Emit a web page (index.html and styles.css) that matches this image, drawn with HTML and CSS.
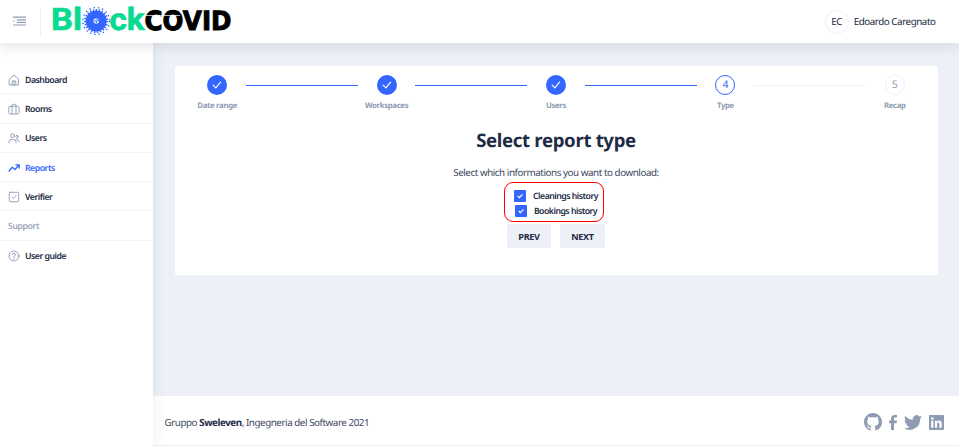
FILE: index.html
```html
<!DOCTYPE html>
<html lang="en">
<head>
<meta charset="utf-8">
<title>BlockCOVID - Reports</title>
<link rel="stylesheet" href="styles.css">
</head>
<body>
<header class="header">
  <svg class="menu-icon" viewBox="0 0 14 10"><path d="M0 1.100h13M4 3.800h9M4 6.400h9M0 9h13"/><path d="M.2 5h1.500"/></svg>
  <div class="logo-wrap">
    <svg class="logo" viewBox="0 0 182 32">
      <g class="logo-green">
        <text x="-1" y="25.500" textLength="31" lengthAdjust="spacingAndGlyphs">Bl</text>
        <text x="57.500" y="25.500" textLength="35" lengthAdjust="spacingAndGlyphs">ck</text>
      </g>
      <g class="virus">
        <circle cx="44.200" cy="17" r="10.500"/>
        <circle class="spikes" cx="44.200" cy="17" r="11"/>
        <circle class="dots-ring" cx="44.200" cy="17" r="13.400"/>
        <circle class="core" cx="44.200" cy="17" r="2.800"/>
        <path class="core-cut" d="M42 17h2.500v2M45 14.500v2h2"/>
      </g>
      <text class="logo-black" x="92.500" y="26" textLength="87" lengthAdjust="spacingAndGlyphs">COVID</text>
      <path class="logo-slit" d="M94 11.500h34"/>
    </svg>
  </div>
  <div class="user"><span class="avatar">EC</span><span>Edoardo Caregnato</span></div>
</header>
<div class="body">
  <nav class="sidebar">
    <a class="item"><svg viewBox="0 0 12 12"><path d="M1.500 5 6 1l4.500 4v6h-9zM4.200 11V7h3.600v4M6 7v4"/></svg>Dashboard</a>
    <a class="item"><svg viewBox="0 0 12 12"><rect x=".8" y="3.300" width="10.400" height="7.700" rx="1.300"/><path d="M4 11V2.200Q4 1.300 5 1.300h2q1 0 1 .9V11"/></svg>Rooms</a>
    <a class="item"><svg viewBox="0 0 12 12"><circle cx="4.500" cy="3.700" r="1.900"/><circle cx="9" cy="4.700" r="1.300"/><path d="M1 10.800v-1Q1.300 7.300 4.500 7.300T8 9.800v1M8 7.500q3-.5 3.300 2.300"/></svg>Users</a>
    <a class="item active"><svg viewBox="0 0 12 12"><path d="m1 9 3.300-3.700L7 7.500 11 3M8 2.800h3.200V6"/></svg>Reports</a>
    <a class="item"><svg viewBox="0 0 12 12"><rect x="1.300" y="1.300" width="9.400" height="9.400" rx="1"/><path d="m4 6 1.500 1.500L8.200 4.300"/></svg>Verifier</a>
    <div class="item group">Support</div>
    <a class="item"><svg viewBox="0 0 12 12"><circle cx="6" cy="6" r="5"/><path d="M4.500 4.700Q4.600 3.300 6 3.300t1.500 1.300Q7.500 5.600 6 6.100V7M6 8.200v.9"/></svg>User guide</a>
  </nav>
  <div class="column">
    <main class="content">
      <section class="card">
        <div class="stepper">
          <div class="step"><span class="circle done"><svg viewBox="0 0 20 20"><path d="m6.200 10.200 2.600 2.600 4.800-5.600"/></svg></span>Date range</div>
          <i class="line"></i>
          <div class="step"><span class="circle done"><svg viewBox="0 0 20 20"><path d="m6.200 10.200 2.600 2.600 4.800-5.600"/></svg></span>Workspaces</div>
          <i class="line"></i>
          <div class="step"><span class="circle done"><svg viewBox="0 0 20 20"><path d="m6.200 10.200 2.600 2.600 4.800-5.600"/></svg></span>Users</div>
          <i class="line"></i>
          <div class="step"><span class="circle current">4</span>Type</div>
          <i class="line pending"></i>
          <div class="step"><span class="circle">5</span>Recap</div>
        </div>
        <h1>Select report type</h1>
        <p class="hint">Select which informations you want to download:</p>
        <div class="options">
          <label class="option"><span class="box"><svg viewBox="0 0 12 12"><path d="m3.700 6 1.700 1.700 3-3.400"/></svg></span>Cleanings history</label>
          <label class="option"><span class="box"><svg viewBox="0 0 12 12"><path d="m3.700 6 1.700 1.700 3-3.400"/></svg></span>Bookings history</label>
        </div>
        <div class="buttons"><button class="prev">PREV</button><button class="next">NEXT</button></div>
      </section>
    </main>
    <footer class="footer">
      <span class="credit">Gruppo <b>Sweleven</b>, Ingegneria del Software 2021</span>
      <div class="socials">
        <svg width="18" height="18" viewBox="0 0 16 16"><path d="M8 0C3.580 0 0 3.580 0 8c0 3.540 2.290 6.530 5.470 7.590.4.070.55-.17.55-.38 0-.19-.01-.82-.01-1.490-2.010.37-2.530-.49-2.690-.94-.09-.23-.48-.94-.82-1.130-.28-.15-.68-.52-.01-.53.63-.01 1.080.58 1.230.82.72 1.210 1.870.87 2.330.66.07-.52.28-.87.51-1.070-1.780-.2-3.640-.89-3.640-3.950 0-.87.31-1.590.82-2.150-.08-.2-.36-1.020.08-2.120 0 0 .67-.21 2.200.82.64-.18 1.320-.27 2-.27s1.360.09 2 .27c1.530-1.040 2.200-.82 2.200-.82.44 1.100.16 1.920.08 2.120.51.56.82 1.270.82 2.150 0 3.070-1.870 3.750-3.650 3.950.29.25.54.73.54 1.480 0 1.070-.01 1.930-.01 2.200 0 .21.15.46.55.38A8 8 0 0 0 16 8c0-4.420-3.580-8-8-8z"/></svg>
        <svg width="8" height="15" viewBox="0 0 8 15"><path d="M2 15V8.200H0V5.500h2V3.700C2 1.400 3.300 0 5.700 0H8v2.600H6.300C5.300 2.600 5 3 5 3.900v1.600h3l-.4 2.700H5V15z"/></svg>
        <svg width="18" height="15" viewBox="0 2 24 20"><path d="M24 4.600a10 10 0 0 1-2.800.8 5 5 0 0 0 2.200-2.700c-1 .6-2 1-3.100 1.200a4.900 4.900 0 0 0-8.400 4.500C7.800 8.200 4.100 6.200 1.700 3.200a4.900 4.900 0 0 0 1.500 6.500 5 5 0 0 1-2.200-.6 4.900 4.900 0 0 0 4 4.900 5 5 0 0 1-2.300.1 4.900 4.900 0 0 0 4.600 3.400A10 10 0 0 1 0 19.500 14 14 0 0 0 21.500 7.100 10 10 0 0 0 24 4.600z"/></svg>
        <svg width="15" height="15" viewBox="0 0 15 15"><path fill-rule="evenodd" d="M1 0h13q1 0 1 1v13q0 1-1 1H1q-1 0-1-1V1q0-1 1-1zm1.200 5.700v7h2.200v-7zM3.300 2.200a1.300 1.300 0 1 0 0 2.600 1.300 1.300 0 0 0 0-2.600zm2.600 3.500v7h2.200V9.100c0-2.100 2.300-2 2.300 0v3.600h2.300V8.500c0-3.500-3.500-3.700-4.600-1.800v-1z"/></svg>
      </div>
    </footer>
  </div>
</div>
</body>
</html>
```
FILE: styles.css
```css
* { box-sizing: border-box; }
body {
  margin: 0;
  height: 446px;
  overflow: hidden;
  display: flex;
  flex-direction: column;
  font-family: "Noto Sans", "Open Sans", sans-serif;
  font-size: 9.800px;
  letter-spacing: -.44px;
  text-rendering: geometricPrecision;
  color: #222b45;
  background: #edf1f7;
}
.header {
  position: relative;
  z-index: 2;
  flex: none;
  height: 43px;
  padding: 0 23.500px 0 13px;
  display: flex;
  align-items: center;
  background: #fff;
  box-shadow: 0 4px 12px rgba(44, 51, 73, .12);
}
.menu-icon { width: 14px; height: 10px; margin-top: -2px; fill: none; stroke: #8f9bb3; stroke-width: 1.200; }
.logo-wrap { margin-left: 13px; padding-left: 11px; height: 28px; border-left: 1px solid #edf1f7; letter-spacing: 0; }
.logo { display: block; width: 182px; height: 32px; margin-top: -4px; overflow: visible; }
.logo-green { font: 700 31px Roboto, sans-serif; fill: #08da91; stroke: #08da91; stroke-width: .6; }
.logo-black { font: 700 26.500px "DejaVu Sans", sans-serif; fill: #000; stroke: #000; stroke-width: 1; }
.logo-slit { stroke: #fff; stroke-width: .7; }
.virus { fill: #3366ff; }
.spikes, .dots-ring { fill: none; stroke: #3366ff; }
.spikes { stroke-width: 2; stroke-dasharray: 1.500 1.500; }
.dots-ring { stroke-width: 1.400; stroke-dasharray: 1.300 3; }
.core { fill: #dce5ff; }
.core-cut { fill: none; stroke: #3366ff; stroke-width: .8; }
.user { margin-left: auto; display: flex; align-items: center; gap: 5px; }
.avatar {
  width: 24px;
  height: 24px;
  display: grid;
  place-items: center;
  border: 1px solid #edf1f7;
  border-radius: 50%;
}
.body { flex: 1; display: flex; min-height: 0; }
.sidebar {
  position: relative;
  z-index: 1;
  width: 152.500px;
  flex: none;
  padding-top: 22px;
  background: #fff;
  box-shadow: 0 0 12px rgba(44, 51, 73, .1);
}
.item {
  height: 29.300px;
  padding: 1px 8px 0;
  display: flex;
  align-items: center;
  gap: 5px;
  border-bottom: 1px solid #f1f4f8;
  font-size: 8.700px;
  letter-spacing: -.47px;
  font-weight: 600;
}
.item:last-child { border-bottom: 0; }
.item svg { width: 12px; height: 12px; fill: none; stroke: #8f9bb3; stroke-width: .9; stroke-linejoin: round; stroke-linecap: round; }
.item.active { color: #3366ff; }
.item.active svg { stroke: #3366ff; stroke-width: 1.300; }
.item.group { color: #8f9bb3; font-weight: 500; letter-spacing: -.35px; }
.column { flex: 1; display: flex; flex-direction: column; }
.content { flex: 1; padding: 23px 21.500px 0 22px; }
.card { height: 209px; padding-top: 9px; background: #fff; border-radius: 2px; display: flex; flex-direction: column; align-items: center; }
.stepper { width: 100%; height: 38px; padding: 0 14px; display: flex; }
.step {
  width: 57.400px;
  flex: none;
  display: flex;
  flex-direction: column;
  align-items: center;
  font-size: 7.800px;
  letter-spacing: -.34px;
  line-height: 11px;
  font-weight: 700;
  color: #8f9bb3;
  gap: 6px;
}
.circle {
  width: 20px;
  height: 20px;
  display: grid;
  place-items: center;
  border: 1px solid #edf1f7;
  border-radius: 50%;
  font-size: 10.500px;
  letter-spacing: 0;
  font-weight: 400;
}
.circle.done { border: 0; background: #3366ff; }
.circle.done svg { width: 20px; height: 20px; fill: none; stroke: #fff; stroke-width: 1.200; stroke-linecap: round; stroke-linejoin: round; }
.circle.current { color: #3366ff; border-color: #3366ff; }
.line { flex: 1; height: 1px; margin-top: 10px; background: #3366ff; }
.line.pending { background: #edf1f7; }
h1 { margin: 15px 0 0; font-size: 18.600px; letter-spacing: -.33px; line-height: 26px; font-weight: 700; }
.hint { margin: 12px 0 0; line-height: 14px; color: #3d4860; }
.options {
  width: 100px;
  height: 40px;
  margin: 2px 0 0 -4px;
  padding: 5px 0 0 4px;
  border: 1px solid #f00;
  border-radius: 9px;
  display: flex;
  flex-direction: column;
  align-items: center;
}
.option { height: 15.500px; display: flex; align-items: center; gap: 7px; font-size: 8.700px; letter-spacing: -.5px; font-weight: 600; white-space: nowrap; }
.box { width: 12px; height: 12px; background: #3366ff; border-radius: 1px; }
.box svg { display: block; fill: none; stroke: #fff; stroke-width: 1.200; }
.buttons { display: flex; gap: 9px; margin-top: 2px; }
button { height: 24px; padding: 0; border: 0; border-radius: 2px; background: #edf1f7; color: #222b45; font: inherit; font-size: 9.100px; letter-spacing: -.3px; font-weight: 700; }
.prev { width: 44px; }
.next { width: 45px; }
.footer {
  height: 50px;
  padding: 3px 15px 0 12px;
  display: flex;
  align-items: center;
  background: #fff;
  border-bottom: 1px solid #edf0f3;
  color: #3d4860;
}
.footer b { color: #222b45; }
.socials { margin-left: auto; display: flex; align-items: center; gap: 7px; fill: #8f9bb3; }
```
